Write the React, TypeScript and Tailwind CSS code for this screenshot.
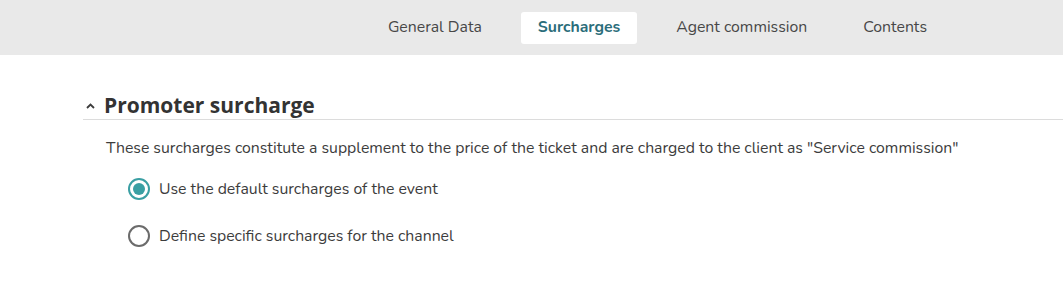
import React, { useState } from 'react';

const tabs = ['General Data', 'Surcharges', 'Agent commission', 'Contents'];

const Radio = ({ checked }: { checked: boolean }) => (
  <span
    className={`flex h-[22px] w-[22px] shrink-0 items-center justify-center rounded-full border-2 ${
      checked ? 'border-[#3a9fa3]' : 'border-[#6b6b6b]'
    }`}
  >
    {checked && <span className="h-[12px] w-[12px] rounded-full bg-[#3a9fa3]" />}
  </span>
);

const App = () => {
  const [choice, setChoice] = useState(0);
  const options = [
    'Use the default surcharges of the event',
    'Define specific surcharges for the channel',
  ];

  return (
    <div className="h-[288px] w-full bg-white font-['Nunito','Lato',sans-serif] text-[#3c3c3c]">
      {/* Tabs */}
      <div className="flex h-[55px] items-center justify-end gap-[22px] bg-[#e9e9e9] pr-[119px]">
        {tabs.map((t) => (
          <div
            key={t}
            className={`flex h-[32px] items-center rounded-[3px] px-[17px] text-[15.8px] ${
              t === 'Surcharges' ? 'bg-white font-bold text-[#2b6d7a]' : 'text-[#474747]'
            }`}
          >
            {t}
          </div>
        ))}
      </div>

      {/* Section */}
      <div className="pl-[83px] pt-[38px]">
        <div className="flex items-center gap-[8px] border-b border-[#dcdcdc] pb-[2px] pl-[2px]">
          <svg width="11" height="8" viewBox="0 0 11 8" className="mt-[1px]">
            <path d="M2 6 L5.5 2.5 L9 6" fill="none" stroke="#3c3c3c" strokeWidth="1.8" />
          </svg>
          <h2 className="font-['Open_Sans',sans-serif] text-[21px] font-bold leading-[24px] text-[#333]">
            Promoter surcharge
          </h2>
        </div>

        <p className="pl-[23px] pt-[18px] text-[15.8px] leading-[20px] text-[#3c3c3c]">
          These surcharges constitute a supplement to the price of the ticket and are charged to the client as "Service commission"
        </p>

        <div className="flex flex-col gap-[25px] pl-[45px] pt-[20px]">
          {options.map((o, i) => (
            <label
              key={o}
              className="flex cursor-pointer items-center gap-[9px] text-[15.8px] leading-[22px]"
              onClick={() => setChoice(i)}
            >
              <Radio checked={choice === i} />
              <span>{o}</span>
            </label>
          ))}
        </div>
      </div>
    </div>
  );
};

export default App;
